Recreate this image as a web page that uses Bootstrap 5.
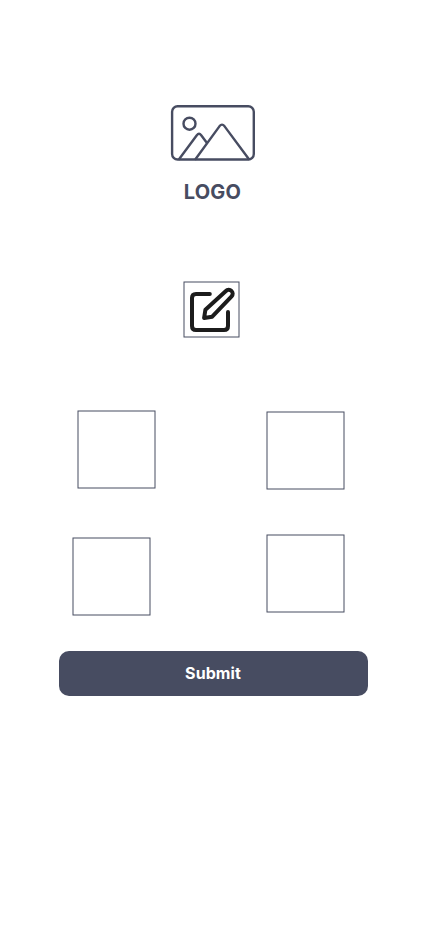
<!DOCTYPE html>
<html lang="en">
<head>
<meta charset="utf-8">
<meta name="viewport" content="width=device-width, initial-scale=1">
<title>Logo</title>
<link href="https://cdn.jsdelivr.net/npm/bootstrap@5.3.0/dist/css/bootstrap.min.css" rel="stylesheet">
<style>
body { font-family: Inter, "Liberation Sans", sans-serif; color: #474c61; background: #fff; }
.screen { width: 428px; height: 926px; padding-top: 104px; }
.brand { margin-left: 170px; width: 85px; }
.brand-name { font-size: 20px; line-height: 24px; font-weight: 700; margin-top: 19px; letter-spacing: .2px; }
.edit-btn { margin: 77px 0 0 183px; }
.tiles { margin-top: 72px; padding: 0 83px 0 77px; }
.tiles-second { margin-top: 44px; padding-left: 72px; }
.tile-low { margin-top: 1px; }
.tile-lower { margin-top: 3px; }
.submit-btn { margin: 35px 60px 0 59px; height: 45px; border-radius: 10px; background: #474c61; font-size: 16px; font-weight: 700; line-height: 20px; letter-spacing: .08px; padding: 5px 13px 7px 12px; }
.submit-btn:hover { background: #3b4056; }
svg { display: block; }
</style>
</head>
<body>
<main class="screen d-flex flex-column overflow-hidden">
  <header class="brand d-flex flex-column align-items-center">
    <svg width="85" height="57" viewBox="170 104 85 57" fill="none" stroke="#474c61" stroke-width="2.4" stroke-linejoin="round" stroke-linecap="round">
      <rect x="172.1" y="106.2" width="81.7" height="53.3" rx="5.5"/>
      <circle cx="189.5" cy="123.7" r="6"/>
      <path d="M179.2 159L196.8 135.2Q199 132.4 201.2 135.2L206.8 142.8"/>
      <path d="M195.6 159L219.6 126.1Q222 123.1 224.4 126.1L248.8 159"/>
    </svg>
    <div class="brand-name">LOGO</div>
  </header>
  <button type="button" class="edit-btn btn p-0 border-0 rounded-0 align-self-start" aria-label="Edit">
    <svg width="57" height="57" viewBox="183 281 57 57" fill="none">
      <rect x="184" y="282" width="55" height="55" stroke="#474c61"/>
      <path d="M209.8 294H196Q192 294 192 298V326Q192 330 196 330H224Q228 330 228 326V312" stroke="#1c1c1c" stroke-width="4" stroke-linecap="round" stroke-linejoin="round"/>
      <path d="M204.1 318L205.4 309.8L225.9 291A3.8 3.8 0 0 1 231.6 296.4L212.2 316.7Z" stroke="#1c1c1c" stroke-width="4" stroke-linejoin="round"/>
    </svg>
  </button>
  <div class="tiles d-flex justify-content-between align-items-start">
    <svg width="79" height="79"><rect x="1" y="1" width="77" height="77" fill="none" stroke="#474c61"/></svg>
    <svg class="tile-low" width="79" height="79"><rect x="1" y="1" width="77" height="77" fill="none" stroke="#474c61"/></svg>
  </div>
  <div class="tiles tiles-second d-flex justify-content-between align-items-start">
    <svg class="tile-lower" width="79" height="79"><rect x="1" y="1" width="77" height="77" fill="none" stroke="#474c61"/></svg>
    <svg width="79" height="79"><rect x="1" y="1" width="77" height="77" fill="none" stroke="#474c61"/></svg>
  </div>
  <button type="submit" class="submit-btn btn border-0 text-white">Submit</button>
</main>
<script src="https://cdn.jsdelivr.net/npm/bootstrap@5.3.0/dist/js/bootstrap.bundle.min.js"></script>
</body>
</html>
